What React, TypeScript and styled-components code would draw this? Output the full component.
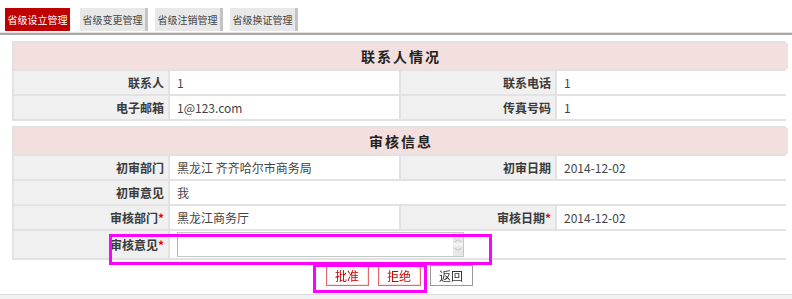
import React, { FC } from "react";
import styled, { createGlobalStyle, css } from "styled-components";

const GlobalStyle = createGlobalStyle`
  html, body {
    margin: 0;
    padding: 0;
    background: #fff;
  }
  body {
    font-family: "Noto Sans CJK SC", "Liberation Sans", sans-serif;
    font-size: 12px;
    color: #333;
  }
`;

const Page = styled.div`
  position: relative;
  width: 792px;
  height: 299px;
  overflow: hidden;
  display: flex;
  flex-direction: column;
`;

const TabBar = styled.div`
  display: flex;
  gap: 7px;
  padding: 8px 0 0 5px;
  height: 25px;
  border-bottom: 2px solid #a8a8a8;
  box-shadow: 0 -1px 0 #e4e4e4 inset;
`;

const Tab = styled.div<{ $active?: boolean }>`
  width: 65px;
  height: 23px;
  line-height: 23px;
  text-align: center;
  font-size: 10px;
  white-space: nowrap;
  overflow: hidden;
  background: #e8e8e8;
  color: #444;
  border-right: 3px solid #c4c4c4;
  ${(p) =>
    p.$active &&
    css`
      background: #c00000;
      color: #fff;
      border-right-color: #fff;
    `}
`;

const Content = styled.div`
  display: flex;
  flex-direction: column;
  gap: 5px;
  padding: 6px 6px 0 12px;
`;

const Grid = styled.div`
  display: grid;
  grid-template-columns: 154px 229px 154px 231px;
  gap: 2px;
  padding: 2px;
  background: #e2e2e2;
  width: 774px;
  box-sizing: border-box;
`;

const Header = styled.div`
  grid-column: 1 / -1;
  height: 26px;
  line-height: 26px;
  text-align: center;
  background: #f3dfdd;
  font-size: 14px;
  font-weight: bold;
  letter-spacing: 2px;
  color: #222;
`;

const Label = styled.div<{ $tall?: boolean }>`
  background: #f0f0f0;
  text-align: right;
  font-weight: bold;
  padding-right: 4px;
  height: ${(p) => (p.$tall ? 27 : 23)}px;
  line-height: ${(p) => (p.$tall ? 27 : 23)}px;
  color: #3a3a3a;
`;

const Value = styled.div<{ $span?: number; $tall?: boolean }>`
  background: #fff;
  padding-left: 7px;
  height: ${(p) => (p.$tall ? 27 : 23)}px;
  line-height: ${(p) => (p.$tall ? 27 : 23)}px;
  color: #444;
  ${(p) =>
    p.$span &&
    css`
      grid-column: span ${p.$span};
    `}
`;

const Star = styled.span`
  color: #e00;
`;

const TextBox = styled.div`
  display: flex;
  width: 287px;
  height: 25px;
  margin-top: 1px;
  border: 1px solid #c8c8c8;
  border-left-color: #9fb6d0;
  box-sizing: border-box;
`;

const Input = styled.textarea`
  flex: 1;
  border: none;
  resize: none;
  outline: none;
  padding: 0;
  font: inherit;
`;

const ScrollRail = styled.div`
  width: 10px;
  display: flex;
  flex-direction: column;
  justify-content: space-between;
  background: #f4f4f4;
`;

const ScrollArrow = styled.div`
  height: 10px;
  background: #e8e8e8;
  color: #aaa;
  font-size: 7px;
  line-height: 10px;
  text-align: center;
`;

const Actions = styled.div`
  display: flex;
  justify-content: center;
  gap: 9px;
`;

const Button = styled.button<{ $danger?: boolean }>`
  width: 43px;
  height: 21px;
  padding: 0;
  font: inherit;
  font-size: 12px;
  background: #fff;
  border: 1px solid #999;
  color: #333;
  ${(p) =>
    p.$danger &&
    css`
      border-color: #e06a6a;
      color: #c00;
      box-shadow: inset 0 0 0 1px #fbe3e3;
    `}
`;

const Footer = styled.div`
  margin-top: auto;
  height: 4px;
  border-top: 1px solid #dcdcdc;
  background: #f2f2f2;
`;

const Mark = styled.div<{ $x: number; $y: number; $w: number; $h: number }>`
  position: absolute;
  left: ${(p) => p.$x}px;
  top: ${(p) => p.$y}px;
  width: ${(p) => p.$w}px;
  height: ${(p) => p.$h}px;
  border: 3px solid #ff00ff;
  box-sizing: border-box;
  pointer-events: none;
`;

const tabs = ["省级设立管理", "省级变更管理", "省级注销管理", "省级换证管理"];

const App: FC = () => (
  <Page>
    <GlobalStyle />
    <TabBar>
      {tabs.map((t, i) => (
        <Tab key={t} $active={i === 0}>
          {t}
        </Tab>
      ))}
    </TabBar>
    <Content>
      <Grid>
        <Header>联系人情况</Header>
        <Label>联系人</Label>
        <Value>1</Value>
        <Label>联系电话</Label>
        <Value>1</Value>
        <Label>电子邮箱</Label>
        <Value>1@123.com</Value>
        <Label>传真号码</Label>
        <Value>1</Value>
      </Grid>
      <Grid>
        <Header>审核信息</Header>
        <Label>初审部门</Label>
        <Value>黑龙江 齐齐哈尔市商务局</Value>
        <Label>初审日期</Label>
        <Value>2014-12-02</Value>
        <Label>初审意见</Label>
        <Value $span={3}>我</Value>
        <Label>
          审核部门<Star>*</Star>
        </Label>
        <Value>黑龙江商务厅</Value>
        <Label>
          审核日期<Star>*</Star>
        </Label>
        <Value>2014-12-02</Value>
        <Label $tall>
          审核意见<Star>*</Star>
        </Label>
        <Value $span={3} $tall>
          <TextBox>
            <Input />
            <ScrollRail>
              <ScrollArrow>︿</ScrollArrow>
              <ScrollArrow>﹀</ScrollArrow>
            </ScrollRail>
          </TextBox>
        </Value>
      </Grid>
      <Actions>
        <Button $danger>批准</Button>
        <Button $danger>拒绝</Button>
        <Button>返回</Button>
      </Actions>
    </Content>
    <Footer />
    <Mark $x={109} $y={234} $w={383} $h={31} />
    <Mark $x={313} $y={264} $w={114} $h={29} />
  </Page>
);

export default App;
